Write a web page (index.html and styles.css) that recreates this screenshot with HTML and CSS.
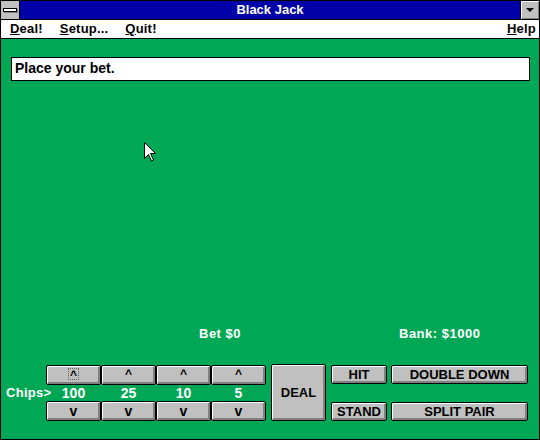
FILE: index.html
```
<!DOCTYPE html>
<html>
<head>
<meta charset="utf-8">
<link rel="stylesheet" href="styles.css">
</head>
<body>
<div class="win">
  <div class="titlebar">
    <div class="sysmenu"><span class="dash"></span></div>
    <div class="title">Black Jack</div>
    <div class="minbox"><span class="tri"></span></div>
  </div>
  <div class="menubar">
    <span class="mi"><u>D</u>eal!</span>
    <span class="mi"><u>S</u>etup...</span>
    <span class="mi"><u>Q</u>uit!</span>
    <span class="mi help"><u>H</u>elp</span>
  </div>
  <div class="table">
    <div class="msg">Place your bet.</div>
    <div class="status"><span class="bet">Bet $0</span><span class="bank">Bank: $1000</span></div>
    <div class="controls">
      <div class="chips">
        <div></div>
        <button class="btn up"><span class="focus">^</span></button>
        <button class="btn up">^</button>
        <button class="btn up">^</button>
        <button class="btn up">^</button>
        <div class="lbl">Chips&gt;</div>
        <div class="val">100</div>
        <div class="val">25</div>
        <div class="val">10</div>
        <div class="val">5</div>
        <div></div>
        <button class="btn down">v</button>
        <button class="btn down">v</button>
        <button class="btn down">v</button>
        <button class="btn down">v</button>
      </div>
      <button class="btn deal">DEAL</button>
      <div class="col col2">
        <button class="btn small">HIT</button>
        <button class="btn small">STAND</button>
      </div>
      <div class="col col3">
        <button class="btn wide">DOUBLE DOWN</button>
        <button class="btn wide">SPLIT PAIR</button>
      </div>
    </div>
  </div>
  <svg class="cursor" width="12" height="20" viewBox="0 0 12 20">
    <polygon points="0.5,0.5 0.5,16.5 4.5,12.5 7.5,19 9.5,18 6.5,11.5 11.5,11.5" fill="#fff" stroke="#000" stroke-width="1"/>
  </svg>
</div>
</body>
</html>
```
FILE: styles.css
```
* { box-sizing: border-box; }
html, body { margin: 0; padding: 0; }
body {
  width: 540px;
  height: 440px;
  overflow: hidden;
  font-family: "Liberation Sans", Arial, sans-serif;
  font-weight: bold;
  font-size: 13px;
}
.win {
  position: relative;
  width: 540px;
  height: 440px;
  border: 1px solid #000;
  display: flex;
  flex-direction: column;
  background: #00a855;
}
.titlebar {
  height: 19px;
  display: flex;
  background: #0000a8;
  border-bottom: 1px solid #000;
  color: #fff;
}
.sysmenu {
  width: 19px;
  height: 18px;
  background: #c0c0c0;
  border-right: 1px solid #000;
  position: relative;
}
.dash {
  position: absolute;
  left: 2px;
  top: 7px;
  width: 14px;
  height: 4px;
  background: #fff;
  border: 1px solid #000;
  box-shadow: 1px 1px 0 #808080;
}
.title {
  flex: 1;
  text-align: center;
  line-height: 18px;
}
.minbox {
  width: 19px;
  height: 18px;
  background: #c0c0c0;
  border-left: 1px solid #000;
  box-shadow: inset 1px 1px 0 #fff, inset -1px -1px 0 #808080;
  display: flex;
  align-items: center;
  justify-content: center;
}
.tri {
  width: 0;
  height: 0;
  border-left: 4px solid transparent;
  border-right: 4px solid transparent;
  border-top: 4px solid #000;
}
.menubar {
  height: 19px;
  background: #fff;
  border-bottom: 1px solid #000;
  display: flex;
  align-items: center;
  padding-left: 9px;
  padding-right: 3px;
  color: #000;
  line-height: 18px;
}
.mi { margin-right: 17px; letter-spacing: 0.2px; }
.mi.help { margin-left: auto; margin-right: 0; }
.table {
  flex: 1;
  display: flex;
  flex-direction: column;
  padding-bottom: 18px;
}
.msg {
  margin: 18px 0 0 10px;
  width: 519px;
  height: 24px;
  background: #fff;
  border: 1px solid #000;
  padding-left: 3px;
  line-height: 21px;
  font-size: 14px;
  color: #000;
}
.status {
  margin-top: auto;
  display: flex;
  color: #fff;
  line-height: 16px;
  padding-left: 198px;
  margin-bottom: 22px;
  letter-spacing: 0.5px;
}
.bet { width: 200px; }
.controls {
  display: flex;
  align-items: flex-start;
  height: 57px;
}
.chips {
  margin-top: 1px;
  display: grid;
  grid-template-columns: 45px repeat(4, 55px);
  grid-template-rows: 20px 16px 20px;
}
.lbl {
  color: #fff;
  padding-left: 5px;
  line-height: 16px;
  font-size: 13px;
  letter-spacing: 0.3px;
}
.val {
  color: #fff;
  text-align: center;
  line-height: 16px;
  font-size: 14px;
}
.btn {
  font-family: "Liberation Sans", Arial, sans-serif;
  font-weight: bold;
  font-size: 13px;
  color: #000;
  background: #c0c0c0;
  border: 1px solid #000;
  border-radius: 2px;
  box-shadow: inset 1px 1px 0 #fff, inset -2px -2px 0 #808080;
  padding: 0;
  margin: 0;
  display: flex;
  align-items: center;
  justify-content: center;
}
.up { align-items: flex-start; padding-top: 2px; line-height: 13px; font-size: 12px; }
.focus {
  border: 1px dotted #606060;
  padding: 0 1px;
  height: 12px;
}
.down { font-size: 14px; }
.deal {
  width: 55px;
  height: 57px;
  margin-left: 5px;
}
.col {
  display: flex;
  flex-direction: column;
  justify-content: space-between;
  height: 57px;
  padding-top: 1px;
}
.col2 { margin-left: 5px; width: 56px; }
.col3 { margin-left: 4px; width: 137px; }
.small, .wide { width: 100%; height: 19px; }
.cursor {
  position: absolute;
  left: 143px;
  top: 141px;
}
```
